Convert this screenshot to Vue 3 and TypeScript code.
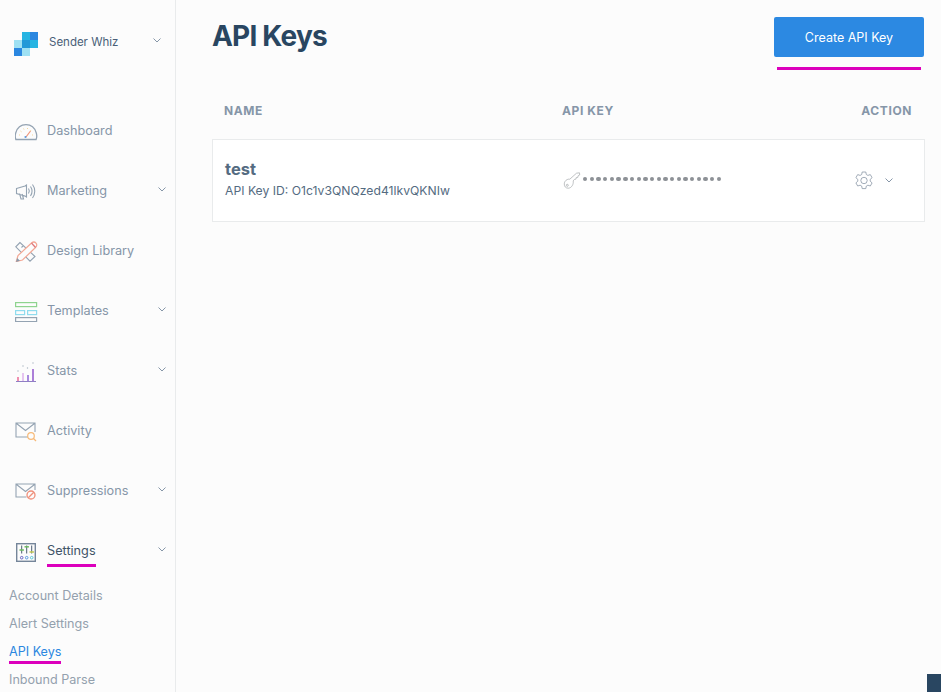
<script setup lang="ts">
const navItems = [
  { name: 'Dashboard', icon: 'dashboard', arrow: false },
  { name: 'Marketing', icon: 'marketing', arrow: true },
  { name: 'Design Library', icon: 'design', arrow: false },
  { name: 'Templates', icon: 'templates', arrow: true },
  { name: 'Stats', icon: 'stats', arrow: true },
  { name: 'Activity', icon: 'activity', arrow: false },
  { name: 'Suppressions', icon: 'suppressions', arrow: true },
  { name: 'Settings', icon: 'settings', arrow: true },
]

const subItems = ['Account Details', 'Alert Settings', 'API Keys', 'Inbound Parse']
</script>

<template>
  <div class="page">
    <aside class="sidebar">
      <div class="brand">
        <svg class="logo" width="24" height="24" viewBox="0 0 24 24">
          <rect x="8" y="0" width="8" height="8" fill="#27b4e2" />
          <rect x="16" y="0" width="8" height="8" fill="#2b87e0" />
          <rect x="0" y="8" width="8" height="8" fill="#9fe1f3" />
          <rect x="8" y="8" width="8" height="8" fill="#2299d8" />
          <rect x="16" y="8" width="8" height="8" fill="#27b4e2" />
          <rect x="0" y="16" width="8" height="8" fill="#2b87e0" />
          <rect x="8" y="16" width="8" height="8" fill="#9fe1f3" />
        </svg>
        <span class="brand-name">Sender Whiz</span>
        <svg class="chevron brand-chevron" width="8" height="5" viewBox="0 0 8 5"><path d="M.5.5 4 4 7.500.5" /></svg>
      </div>

      <nav class="nav">
        <div
          v-for="item in navItems"
          :key="item.name"
          class="nav-item"
          :class="{ active: item.name === 'Settings' }"
        >
          <svg class="nav-icon" width="24" height="24" viewBox="0 0 24 24" fill="none" stroke="#94a3b2" stroke-width="1">
            <template v-if="item.icon === 'dashboard'">
              <path d="M.9 21.500C.1 19.500.1 17 .7 15 2.200 9.800 6 6.700 11 6.700S19.800 9.800 21.300 15C21.900 17 21.900 19.500 21.100 21.500Z" stroke-width="1.300" />
              <path d="M11 19 15.500 13" stroke="#f0967a" stroke-width="1.200" />
              <circle cx="10.500" cy="19" r="1.100" fill="#5b9be0" stroke="none" />
              <path d="M4 17h1M5.500 13l1 .8M8.500 10.500l.5 1M12.500 10v1M16 12l-.6.800M18 17h-1" stroke="#f3d79c" />
            </template>
            <template v-else-if="item.icon === 'marketing'">
              <path d="M1.500 10.500 10 8l1.500-1v12l-1.500-1-8.500-2.500ZM4.500 15.500 6 21h2.500L7.200 16" stroke-width="1.100" />
              <path d="M13.500 10.500c1 1.500 1 3.500 0 5M15.500 8.500c2 3 2 6.500 0 9.500M17.500 6.500c3 4 3 9.500 0 13.500" stroke-width="1.100" />
            </template>
            <template v-else-if="item.icon === 'design'">
              <path d="M5 4.500.8 8.800 15 23.200l5-4.700ZM6.500 9.500l1.800-1.800M9.500 12.500l1.800-1.800M12.500 15.500l1.800-1.800" stroke-width="1.100" />
              <path d="M1.300 23.500 3 17.500 16.500 5C18 3.800 20 4 21 5.200S21.800 8.200 20.500 9.500L7.500 22Z" stroke="#f3a794" fill="#fcfcfc" stroke-width="1.200" />
              <path d="M16.500 5l4 4.500" stroke="#e0777a" stroke-width="1.200" />
              <path d="M1 24l1.200-4 2.800 2.800Z" fill="#8a9bad" stroke="none" />
            </template>
            <template v-else-if="item.icon === 'templates'">
              <rect x=".6" y="4.600" width="21" height="4" stroke="#8fd48f" stroke-width="1.200" />
              <rect x=".6" y="12.600" width="9" height="4" stroke="#8fdcee" stroke-width="1.200" />
              <rect x="12.600" y="12.600" width="9" height="4" stroke="#8fdcee" stroke-width="1.200" />
              <rect x=".6" y="19.600" width="21" height="4" stroke-width="1.200" />
            </template>
            <template v-else-if="item.icon === 'stats'">
              <path d="M1 23.500h20" stroke="#8f7fc4" />
              <rect x="2" y="19" width="2" height="4" fill="#f08fb0" stroke="none" />
              <rect x="7" y="15" width="2" height="8" fill="#e6c5f0" stroke="none" />
              <rect x="12" y="17" width="2" height="6" fill="#a98adf" stroke="none" />
              <rect x="17" y="11" width="2" height="12" fill="#ac7fd8" stroke="none" />
              <path d="M3 12.500v1M8 7.500v1M12.500 9.500v1M18 4.500v1" stroke-width="1.200" />
            </template>
            <template v-else-if="item.icon === 'activity'">
              <path d="M13 19H1V5h19v9M1.500 5.500l9 7 9-7" stroke-width="1.100" />
              <circle cx="16" cy="18" r="3.300" stroke="#f7b977" stroke-width="1.200" />
              <path d="m18.500 20.500 2.500 2.500" stroke="#f7b977" stroke-width="1.200" />
            </template>
            <template v-else-if="item.icon === 'suppressions'">
              <path d="M11.500 19H1V6h19v6M1.500 6.500l9 7 9-7" stroke-width="1.100" />
              <circle cx="16" cy="17" r="4" stroke="#ef8f7a" stroke-width="1.300" />
              <path d="m13.300 19.800 5.500-5.600" stroke="#ef8f7a" stroke-width="1.300" />
            </template>
            <template v-else>
              <rect x="1.700" y="5.700" width="18.600" height="17.600" stroke="#75869a" stroke-width="1.400" />
              <path d="M6.700 7.500v8M11.700 7.500v8M16.700 7.500v8" stroke="#4c5d70" />
              <path d="M4.500 12h4.400" stroke="#6dbb5f" stroke-width="1.500" />
              <path d="M9.500 8.800h4.400" stroke="#6dbb5f" stroke-width="1.500" />
              <path d="M14.500 14h4.400" stroke="#c0c84f" stroke-width="1.500" />
              <circle cx="6.700" cy="19.700" r="1.300" stroke="#6b64c4" />
              <circle cx="11.700" cy="19.700" r="1.300" stroke="#5b9be0" />
              <circle cx="16.700" cy="19.700" r="1.300" stroke="#5fc8d8" />
            </template>
          </svg>
          <span class="nav-label">{{ item.name }}</span>
          <svg v-if="item.arrow" class="chevron" width="8" height="5" viewBox="0 0 8 5"><path d="M.5.5 4 4 7.500.5" /></svg>
          <span v-if="item.name === 'Settings'" class="mark settings-mark"></span>
        </div>
      </nav>

      <ul class="sub-nav">
        <li v-for="sub in subItems" :key="sub" :class="{ current: sub === 'API Keys' }">
          {{ sub }}
          <span v-if="sub === 'API Keys'" class="mark keys-mark"></span>
        </li>
      </ul>
    </aside>

    <main class="content">
      <header class="top">
        <h1>API Keys</h1>
        <button class="create-btn" type="button">
          Create API Key
          <span class="mark btn-mark"></span>
        </button>
      </header>

      <div class="table-head row-grid">
        <span>NAME</span>
        <span>API KEY</span>
        <span class="right">ACTION</span>
      </div>

      <div class="card row-grid">
        <div>
          <div class="key-name">test</div>
          <div class="key-id">API Key ID: O1c1v3QNQzed41lkvQKNIw</div>
        </div>
        <div class="secret">
          <svg width="18" height="18" viewBox="0 0 18 18" fill="none" stroke="#a3a7ab" stroke-width=".7">
            <path d="M6.800 7.200 13.500 1.200 16.500.8l.2 2.200-1.700.9-.2 1.500-1.600.2-.2 1.500-1.600.3-1.200 1.500c.6 3.300-1.600 7-4.700 7.300-2.700.2-4.400-1.800-4.200-4.300C1.300 9 4.200 6.700 6.800 7.200Z" stroke-linejoin="round" />
            <circle cx="4.300" cy="13.300" r="1" />
          </svg>
          <span class="dots">
            <i v-for="n in 21" :key="n"></i>
          </span>
        </div>
        <div class="actions">
          <svg width="20" height="20" viewBox="0 0 20 20" fill="none" stroke="#8a97a6" stroke-width=".8">
            <path d="M8.200 1h3.600l.5 2.500 1.600.9 2.400-.8 1.800 3.100-1.900 1.700v1.800l1.900 1.700-1.800 3.100-2.400-.8-1.600.9-.5 2.500H8.200l-.5-2.500-1.600-.9-2.400.8-1.800-3.100 1.900-1.700V8.400L1.900 6.700l1.800-3.100 2.400.8 1.600-.9z" stroke-linejoin="round" />
            <circle cx="10" cy="9.500" r="3.200" />
          </svg>
          <svg class="chevron" width="8" height="5" viewBox="0 0 8 5"><path d="M.5.5 4 4 7.500.5" /></svg>
        </div>
      </div>
    </main>

    <div class="corner"></div>
  </div>
</template>

<style scoped>
.page {
  position: relative;
  display: flex;
  width: 941px;
  height: 692px;
  overflow: hidden;
  background: #fcfcfc;
  font-family: Inter, 'Noto Sans', sans-serif;
  font-size: 12.700px;
  color: #8696a8;
}

.sidebar {
  flex: none;
  width: 175px;
  border-right: 1px solid #e9ebec;
}

.brand {
  display: flex;
  align-items: center;
  height: 24px;
  margin-top: 32px;
  padding-left: 14px;
}

.brand-name {
  margin-left: 11px;
  margin-top: -4px;
  font-size: 11.500px;
  color: #4a5f78;
}

.brand-chevron {
  margin-left: auto;
  margin-right: 14px;
  margin-top: -7px;
}

.chevron {
  fill: none;
  stroke: #8696a8;
  stroke-width: 1;
}

.nav {
  margin-top: 44px;
}

.nav-item {
  position: relative;
  display: flex;
  align-items: center;
  height: 60px;
  padding-left: 15px;
}

.nav-icon {
  flex: none;
}

.nav-label {
  margin-left: 8px;
}

.nav-item .chevron {
  position: absolute;
  right: 9px;
  top: 27px;
}

.nav-item.active .nav-label {
  color: #3f5468;
}

.sub-nav {
  list-style: none;
  margin: 2px 0 0;
  padding: 0 0 0 9px;
}

.sub-nav li {
  position: relative;
  height: 28px;
  line-height: 28px;
  font-size: 12.600px;
  color: #94a1ae;
  white-space: nowrap;
}

.sub-nav li.current {
  color: #2b87e0;
}

.mark {
  position: absolute;
  height: 3px;
  background: #dc00bc;
}

.settings-mark {
  left: 47px;
  top: 44px;
  width: 49px;
}

.keys-mark {
  left: 0;
  top: 23px;
  width: 52px;
}

.btn-mark {
  left: 3px;
  top: 50px;
  width: 144px;
}

.content {
  flex: 1;
  padding: 0 16px 0 36px;
}

.top {
  display: flex;
  justify-content: space-between;
  align-items: center;
  height: 74px;
}

h1 {
  margin: 0 0 2px;
  font-size: 28px;
  font-weight: 700;
  letter-spacing: -0.8px;
  color: #294661;
}

.create-btn {
  position: relative;
  width: 150px;
  height: 40px;
  margin-right: 1px;
  border: none;
  border-radius: 2px;
  background: #2c89e2;
  color: #fff;
  font: 400 12.500px Inter, sans-serif;
}

.row-grid {
  display: grid;
  grid-template-columns: 338px 1fr auto;
  align-items: center;
}

.table-head {
  height: 65px;
  box-sizing: border-box;
  padding: 8px 13px 0 12px;
  font-size: 12px;
  font-weight: 700;
  letter-spacing: 0.6px;
  color: #8696a8;
}

.right {
  text-align: right;
}

.card {
  height: 83px;
  box-sizing: border-box;
  padding: 0 31px 0 12px;
  background: #fff;
  border: 1px solid #e9ebec;
}

.key-name {
  margin-top: -3px;
  font-size: 16.500px;
  font-weight: 700;
  line-height: 20px;
  color: #546b81;
}

.key-id {
  margin-top: 4px;
  font-size: 12.200px;
  line-height: 16px;
  color: #546b81;
  white-space: nowrap;
}

.secret {
  display: flex;
  align-items: center;
  gap: 2px;
}

.dots {
  display: flex;
  gap: 2.300px;
  margin-top: -3px;
}

.dots i {
  width: 4.400px;
  height: 4.400px;
  border-radius: 50%;
  background: #8d9196;
}

.actions {
  display: flex;
  align-items: center;
  gap: 11px;
}

.corner {
  position: absolute;
  right: 0;
  bottom: 0;
  width: 14px;
  height: 18px;
  background: #294661;
}
</style>
